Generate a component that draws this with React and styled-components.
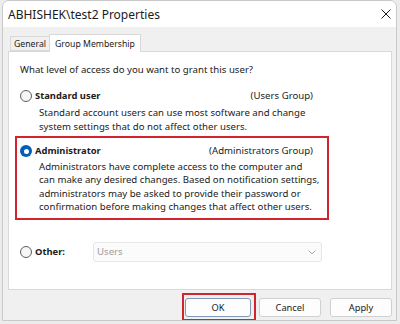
import styled, { createGlobalStyle } from "styled-components";

const GlobalStyle = createGlobalStyle`
  body {
    margin: 0;
    background: #ececec;
    font-family: "Noto Sans", "Open Sans", sans-serif;
    color: #1b1b1b;
  }
`;

const Window = styled.div`
  width: 395px;
  height: 321px;
  margin: 0 0 0 2px;
  box-sizing: border-box;
  background: #f0f0f0;
  border: 1px solid #c9c9c9;
  border-radius: 7px 7px 0 0;
  display: flex;
  flex-direction: column;
  overflow: hidden;
`;

const TitleBar = styled.div`
  height: 26px;
  flex: none;
  background: #fff;
  display: flex;
  align-items: center;
  justify-content: space-between;
  padding: 0 4px 0 5px;
  font-size: 12px;
`;

const Close = styled.div`
  width: 12px;
  height: 12px;
  display: flex;
  align-items: center;
  justify-content: center;
`;

const Body = styled.div`
  flex: 1;
  display: flex;
  flex-direction: column;
  padding: 6px 4px 0 5px;
`;

const TabRow = styled.div`
  display: flex;
  align-items: flex-end;
  height: 18px;
  padding-left: 2px;
  position: relative;
  z-index: 1;
`;

const Tab = styled.div`
  height: ${(p) => (p.$active ? "18px" : "15px")};
  box-sizing: border-box;
  padding: 0 ${(p) => (p.$active ? "5px" : "3px")};
  margin-bottom: ${(p) => (p.$active ? "-1px" : "0")};
  background: ${(p) => (p.$active ? "#fff" : "#f0f0f0")};
  border: 1px solid #d9d9d9;
  border-bottom: ${(p) => (p.$active ? "none" : "1px solid #d9d9d9")};
  border-right: ${(p) => (p.$active ? "1px solid #d9d9d9" : "none")};
  font-size: 8.7px;
  display: flex;
  align-items: center;
`;

const Panel = styled.div`
  height: 239px;
  box-sizing: border-box;
  background: #fff;
  border: 1px solid #d9d9d9;
  padding: 11px 0 0 11px;
  display: flex;
  flex-direction: column;
  font-size: 9.65px;
  line-height: 14px;
`;

const Question = styled.div`
  white-space: nowrap;
`;

const Option = styled.div`
  display: flex;
  flex-direction: column;
  width: 293px;
  margin-top: ${(p) => p.$top || 0}px;
`;

const Highlight = styled.div`
  width: 314px;
  box-sizing: border-box;
  margin: 2px 0 0 -5px;
  border: 2px solid #d1242f;
  padding: 6px 14px 5px 3px;
`;

const Row = styled.div`
  display: flex;
  align-items: center;
  justify-content: space-between;
  height: 14px;
`;

const LabelWrap = styled.div`
  display: flex;
  align-items: center;
  gap: 3px;
  width: ${(p) => (p.$w ? `${p.$w}px` : "auto")};
  flex: none;
`;

const Radio = styled.span`
  width: 12px;
  height: 12px;
  box-sizing: border-box;
  border-radius: 50%;
  border: ${(p) => (p.$checked ? "none" : "1px solid #5e5e5e")};
  background: ${(p) => (p.$checked ? "#005fb8" : "#f7f7f7")};
  display: flex;
  align-items: center;
  justify-content: center;
  &::after {
    content: "";
    display: ${(p) => (p.$checked ? "block" : "none")};
    width: 5px;
    height: 5px;
    border-radius: 50%;
    background: #fff;
  }
`;

const Label = styled.span`
  font-weight: 700;
  font-size: 9.4px;
`;

const Desc = styled.div`
  padding-left: 19px;
  margin-top: ${(p) => p.$top || 3}px;
  line-height: ${(p) => p.$lh || 14}px;
  white-space: nowrap;
`;

const OtherRow = styled.div`
  display: flex;
  align-items: center;
  margin-top: 22px;
  height: 20px;
`;

const Select = styled.div`
  width: 229px;
  height: 20px;
  box-sizing: border-box;
  border: 1px solid #e6e6e6;
  border-radius: 3px;
  background: #fbfbfb;
  color: #9c9c9c;
  display: flex;
  align-items: center;
  justify-content: space-between;
  padding: 0 5px 0 3px;
`;

const Buttons = styled.div`
  display: flex;
  justify-content: flex-end;
  align-items: center;
  margin-top: 3px;
`;

const Mark = styled.div`
  border: 2px solid #d1242f;
  padding: 3px 3px 2px 1px;
  display: flex;
`;

const Button = styled.div`
  width: ${(p) => p.$w || 62}px;
  height: 19px;
  box-sizing: border-box;
  margin-left: ${(p) => p.$ml || 0}px;
  border: 1px solid ${(p) => (p.$default ? "#7f98b8" : "#d0d0d0")};
  border-radius: 3px;
  background: #fdfdfd;
  font-size: 9.3px;
  display: flex;
  align-items: center;
  justify-content: center;
`;

export default function App() {
  return (
    <>
      <GlobalStyle />
      <Window>
        <TitleBar>
          <span>ABHISHEK\test2 Properties</span>
          <Close>
            <svg width="10" height="10" viewBox="0 0 10 10">
              <path d="M0.5 0.5L9.5 9.5M9.5 0.5L0.5 9.5" stroke="#1b1b1b" strokeWidth="1" />
            </svg>
          </Close>
        </TitleBar>
        <Body>
          <TabRow>
            <Tab>General</Tab>
            <Tab $active>Group Membership</Tab>
          </TabRow>
          <Panel>
            <Question>What level of access do you want to grant this user?</Question>
            <Option $top={12}>
              <Row>
                <LabelWrap>
                  <Radio />
                  <Label>Standard user</Label>
                </LabelWrap>
                <span>(Users Group)</span>
              </Row>
              <Desc>
                Standard account users can use most software and change
                <br />
                system settings that do not affect other users.
              </Desc>
            </Option>
            <Highlight>
              <Row>
                <LabelWrap>
                  <Radio $checked />
                  <Label>Administrator</Label>
                </LabelWrap>
                <span>(Administrators Group)</span>
              </Row>
              <Desc $top={2} $lh={13.3}>
                Administrators have complete access to the computer and
                <br />
                can make any desired changes. Based on notification settings,
                <br />
                administrators may be asked to provide their password or
                <br />
                confirmation before making changes that affect other users.
              </Desc>
            </Highlight>
            <OtherRow>
              <LabelWrap $w={73}>
                <Radio />
                <Label>Other:</Label>
              </LabelWrap>
              <Select>
                <span>Users</span>
                <svg width="8" height="5" viewBox="0 0 8 5">
                  <path d="M0.5 0.5L4 4L7.5 0.5" fill="none" stroke="#a8a8a8" strokeWidth="1" />
                </svg>
              </Select>
            </OtherRow>
          </Panel>
          <Buttons>
            <Mark>
              <Button $w={66} $default>OK</Button>
            </Mark>
            <Button $ml={3}>Cancel</Button>
            <Button $ml={9}>Apply</Button>
          </Buttons>
        </Body>
      </Window>
    </>
  );
}
